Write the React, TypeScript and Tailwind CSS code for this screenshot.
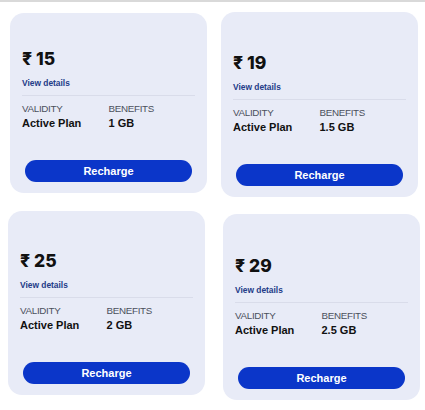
import React from 'react';

interface Plan {
  price: string;
  data: string;
  wrap: string;
  card: string;
}

const plans: Plan[] = [
  { price: '15', data: '1 GB', wrap: 'ml-[10px] mt-[11px]', card: 'h-[180px] pt-[36px]' },
  { price: '19', data: '1.5 GB', wrap: 'ml-[9px] mt-[10px]', card: 'h-[185px] pt-[41px]' },
  { price: '25', data: '2 GB', wrap: 'ml-[8px] mt-[14px]', card: 'h-[184px] pt-[40px]' },
  { price: '29', data: '2.5 GB', wrap: 'ml-[11px] mt-[17px]', card: 'h-[186px] pt-[42px]' },
];

const PlanCard = ({ plan }: { plan: Plan }) => (
  <div className={plan.wrap}>
    <div className={`w-[197px] ${plan.card} pb-[11px] px-3 flex flex-col rounded-[14px] bg-[#e8ebf7]`}>
      <div className="font-['Inter',sans-serif] text-[17.5px] leading-[20px] font-extrabold text-[#111111]">₹ {plan.price}</div>
      <div className="mt-[9px] text-[8.4px] leading-[10px] font-bold text-[#233b88]">View details</div>
      <div className="mt-[7px] border-t border-[#d9dcea]" />
      <div className="grid grid-cols-2 pt-[7px]">
        <div>
          <div className="text-[9.8px] leading-[11px] tracking-[-0.3px] text-[#4b505c]">VALIDITY</div>
          <div className="mt-[3px] text-[11px] leading-[13px] font-bold text-[#111111]">Active Plan</div>
        </div>
        <div>
          <div className="text-[9.8px] leading-[11px] tracking-[-0.3px] text-[#4b505c]">BENEFITS</div>
          <div className="mt-[3px] text-[11px] leading-[13px] font-bold text-[#111111]">{plan.data}</div>
        </div>
      </div>
      <button className="mt-auto mx-[3px] h-[22px] rounded-full bg-[#0b36c9] text-white text-[11px] font-bold">
        Recharge
      </button>
    </div>
  </div>
);

export default function App() {
  return (
    <div
      className="w-[425px] h-[410px] bg-white overflow-hidden"
      style={{ fontFamily: '"Liberation Sans", Arial, sans-serif' }}
    >
      <div className="h-[2px] bg-[#d9d9d9]" />
      <div className="grid grid-cols-[212px_213px] items-start">
        {plans.map((p) => (
          <PlanCard key={p.price} plan={p} />
        ))}
      </div>
    </div>
  );
}
